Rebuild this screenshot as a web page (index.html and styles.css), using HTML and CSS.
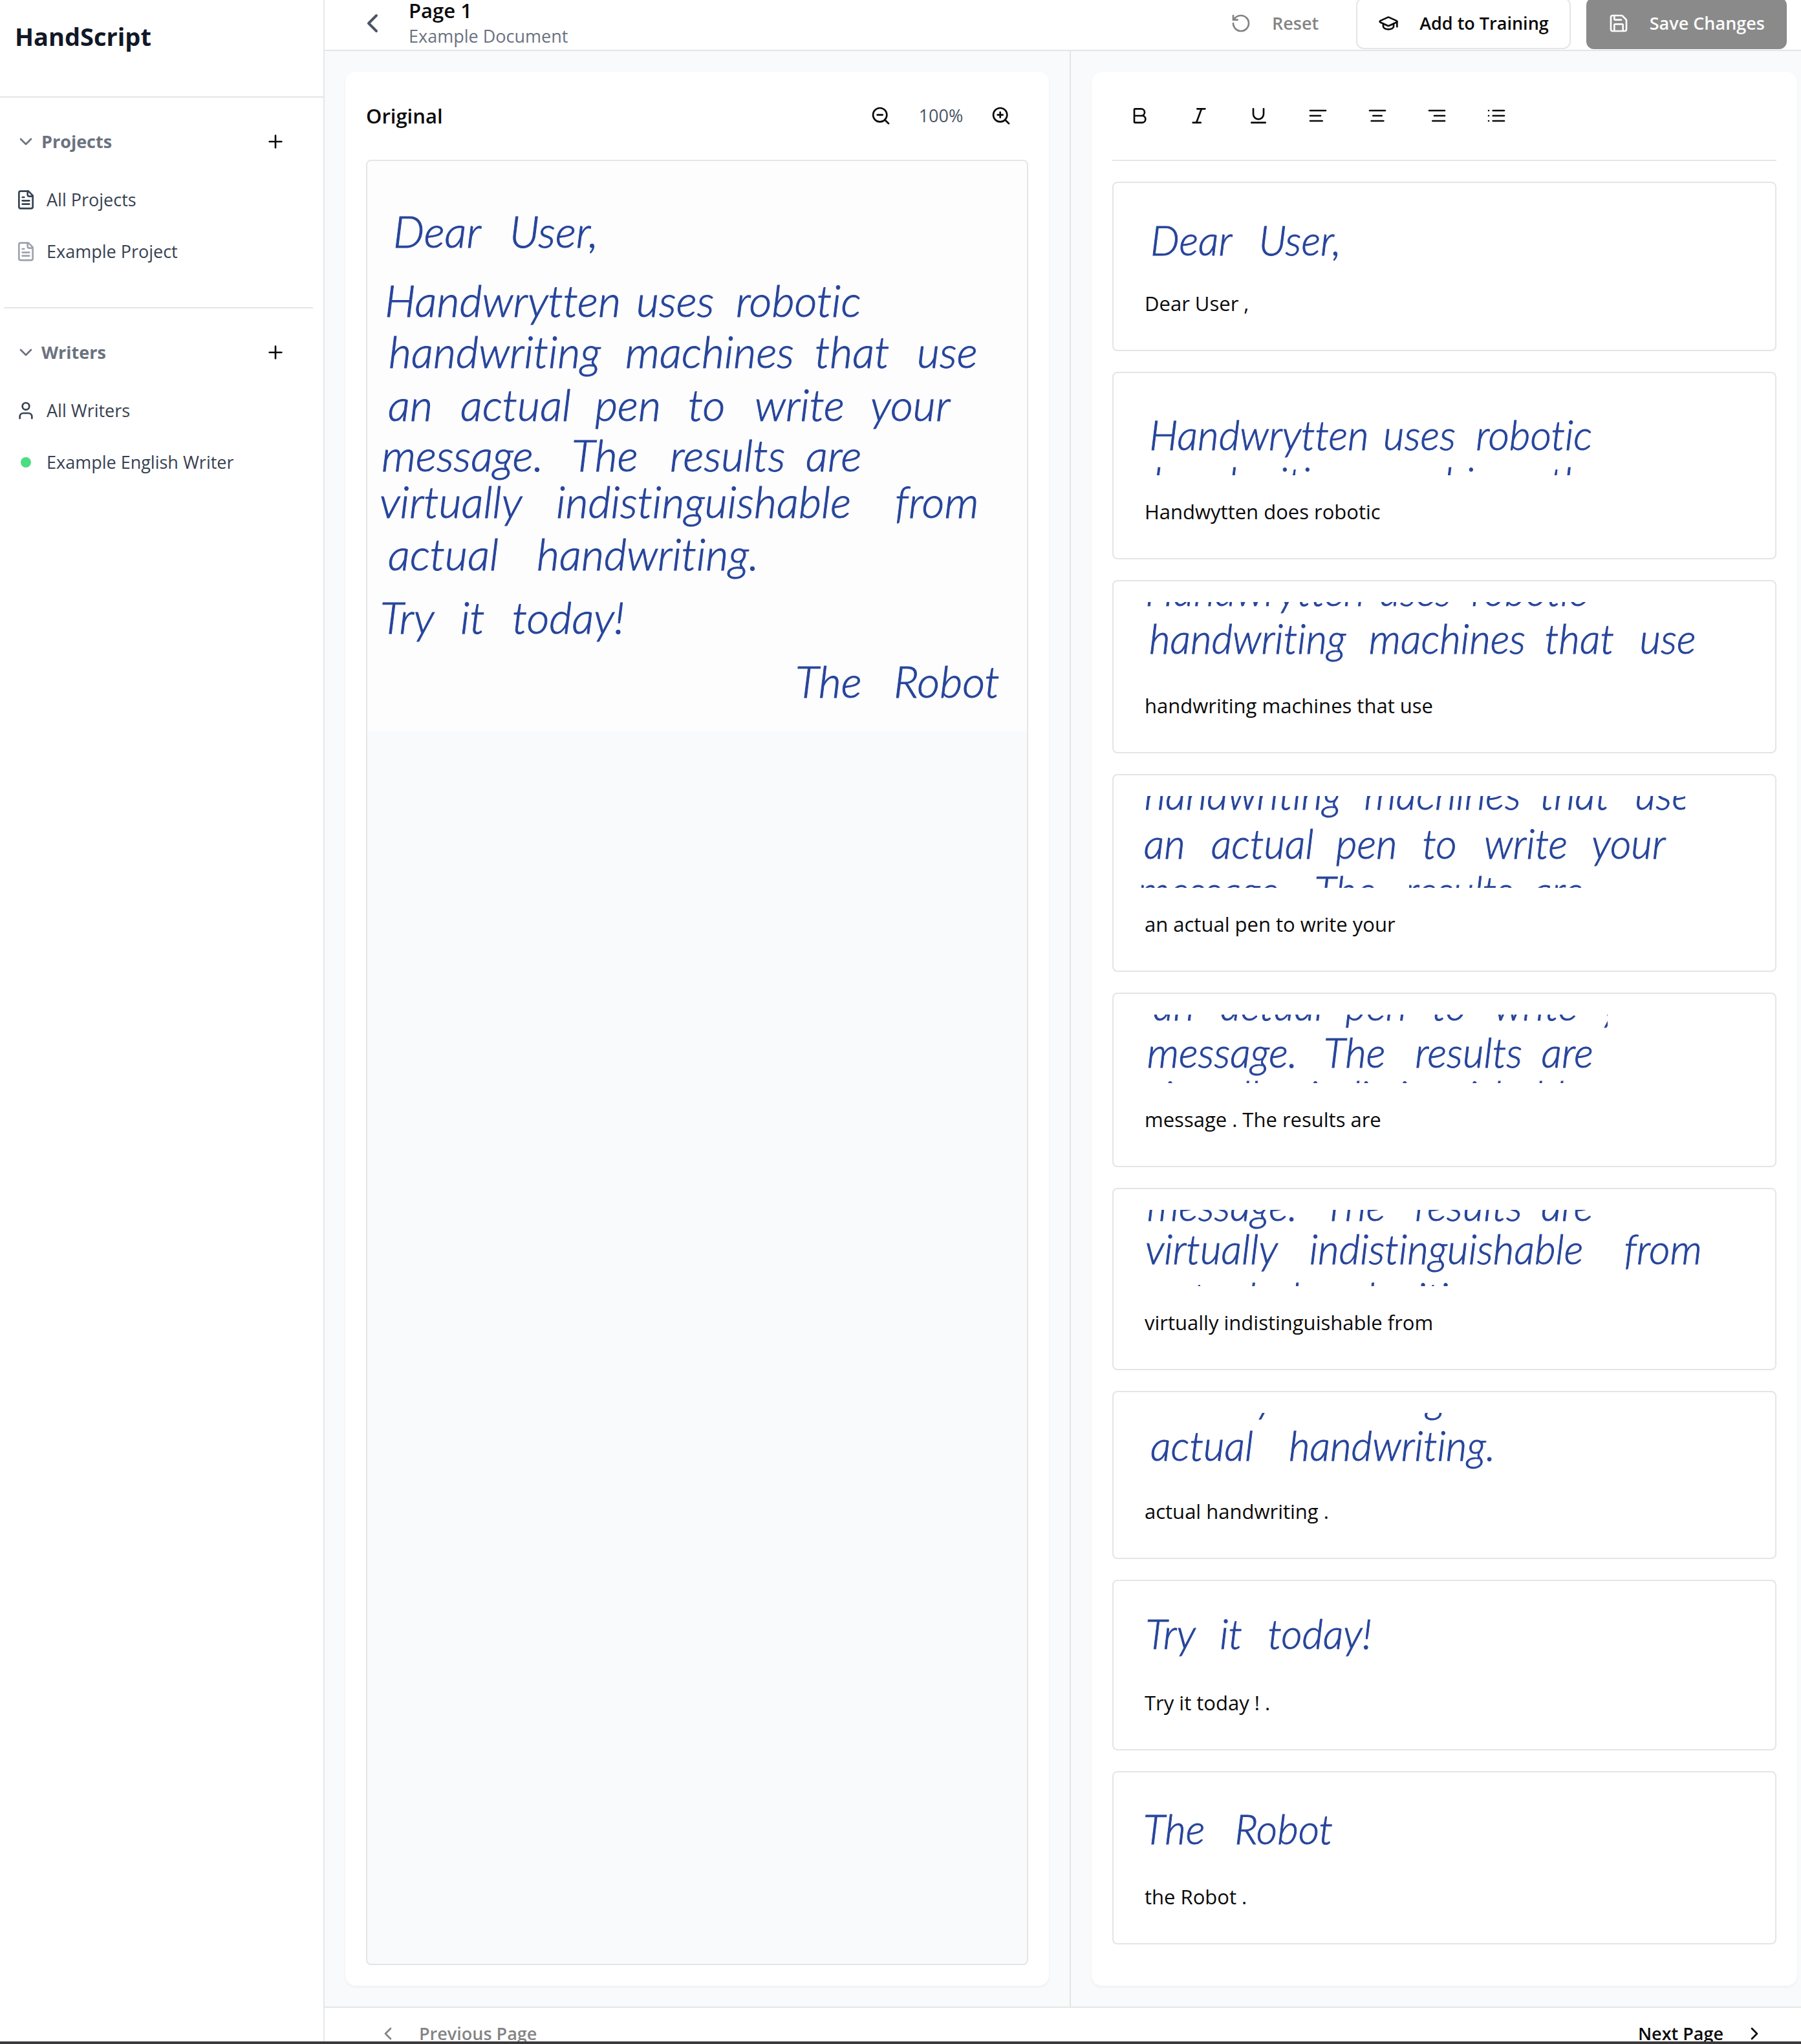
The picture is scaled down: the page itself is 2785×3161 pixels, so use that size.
FILE: index.html
```html
<!DOCTYPE html>
<html lang="en">
<head>
<meta charset="utf-8">
<meta name="viewport" content="width=device-width, initial-scale=1">
<title>HandScript</title>
<link rel="stylesheet" href="styles.css">
</head>
<body>
<svg class="defs" aria-hidden="true">
  <defs>
    <symbol id="i-file" viewBox="0 0 24 24"><path d="M15 2H6a2 2 0 0 0-2 2v16a2 2 0 0 0 2 2h12a2 2 0 0 0 2-2V7Z"/><path d="M14 2v4a2 2 0 0 0 2 2h4"/><path d="M10 9H8"/><path d="M16 13H8"/><path d="M16 17H8"/></symbol>
    <symbol id="i-plus" viewBox="0 0 24 24"><path d="M5 12h14"/><path d="M12 5v14"/></symbol>
    <symbol id="i-down" viewBox="0 0 24 24"><path d="m6 9 6 6 6-6"/></symbol>
    <symbol id="i-left" viewBox="0 0 24 24"><path d="m15 18-6-6 6-6"/></symbol>
    <symbol id="i-right" viewBox="0 0 24 24"><path d="m9 18 6-6-6-6"/></symbol>
    <symbol id="i-user" viewBox="0 0 24 24"><path d="M19 21v-2a4 4 0 0 0-4-4H9a4 4 0 0 0-4 4v2"/><circle cx="12" cy="7" r="4"/></symbol>
    <symbol id="i-reset" viewBox="0 0 24 24"><path d="M3 12a9 9 0 1 0 9-9 9.75 9.75 0 0 0-6.74 2.74L3 8"/><path d="M3 3v5h5"/></symbol>
    <symbol id="i-cap" viewBox="0 0 24 24"><path d="M21.42 10.922a1 1 0 0 0-.019-1.838L12.83 5.18a2 2 0 0 0-1.66 0L2.6 9.08a1 1 0 0 0 0 1.832l8.57 3.908a2 2 0 0 0 1.66 0z"/><path d="M22 10v6"/><path d="M6 12.5V16a6 3 0 0 0 12 0v-3.5"/></symbol>
    <symbol id="i-save" viewBox="0 0 24 24"><path d="M15.2 3a2 2 0 0 1 1.4.6l3.8 3.8a2 2 0 0 1 .6 1.4V19a2 2 0 0 1-2 2H5a2 2 0 0 1-2-2V5a2 2 0 0 1 2-2z"/><path d="M17 21v-7a1 1 0 0 0-1-1H8a1 1 0 0 0-1 1v7"/><path d="M7 3v4a1 1 0 0 0 1 1h7"/></symbol>
    <symbol id="i-zoomout" viewBox="0 0 24 24"><circle cx="11" cy="11" r="8"/><path d="m21 21-4.35-4.35"/><path d="M8 11h6"/></symbol>
    <symbol id="i-zoomin" viewBox="0 0 24 24"><circle cx="11" cy="11" r="8"/><path d="m21 21-4.35-4.35"/><path d="M11 8v6"/><path d="M8 11h6"/></symbol>
    <symbol id="i-bold" viewBox="0 0 24 24"><path d="M6 12h9a4 4 0 0 1 0 8H7a1 1 0 0 1-1-1V5a1 1 0 0 1 1-1h7a4 4 0 0 1 0 8"/></symbol>
    <symbol id="i-italic" viewBox="0 0 24 24"><path d="M19 4h-9"/><path d="M14 20H5"/><path d="M15 4 9 20"/></symbol>
    <symbol id="i-underline" viewBox="0 0 24 24"><path d="M6 4v6a6 6 0 0 0 12 0V4"/><path d="M4 20h16"/></symbol>
    <symbol id="i-aleft" viewBox="0 0 24 24"><path d="M15 12H3"/><path d="M17 18H3"/><path d="M21 6H3"/></symbol>
    <symbol id="i-acenter" viewBox="0 0 24 24"><path d="M17 12H7"/><path d="M19 18H5"/><path d="M21 6H3"/></symbol>
    <symbol id="i-aright" viewBox="0 0 24 24"><path d="M21 12H9"/><path d="M21 18H7"/><path d="M21 6H3"/></symbol>
    <symbol id="i-list" viewBox="0 0 24 24"><path d="M3 12h.01"/><path d="M3 18h.01"/><path d="M3 6h.01"/><path d="M8 12h13"/><path d="M8 18h13"/><path d="M8 6h13"/></symbol>
  </defs>
</svg>

<div class="app">
  <aside class="sidebar">
    <div class="brand"><h1>HandScript</h1></div>
    <section class="group">
      <div class="group-head">
        <button class="toggle" type="button"><svg class="icon"><use href="#i-down"/></svg>Projects</button>
        <button class="add" type="button" aria-label="Add project"><svg class="icon"><use href="#i-plus"/></svg></button>
      </div>
      <nav class="items" aria-label="Projects">
        <a href="#projects"><svg class="icon"><use href="#i-file"/></svg>All Projects</a>
        <a href="#example-project"><svg class="icon muted"><use href="#i-file"/></svg>Example Project</a>
      </nav>
    </section>
    <hr class="rule">
    <section class="group">
      <div class="group-head">
        <button class="toggle" type="button"><svg class="icon"><use href="#i-down"/></svg>Writers</button>
        <button class="add" type="button" aria-label="Add writer"><svg class="icon"><use href="#i-plus"/></svg></button>
      </div>
      <nav class="items" aria-label="Writers">
        <a href="#writers"><svg class="icon"><use href="#i-user"/></svg>All Writers</a>
        <a href="#example-writer"><span class="dot"></span>Example English Writer</a>
      </nav>
    </section>
  </aside>

  <main class="main">
    <header class="topbar">
      <button class="back" type="button" aria-label="Back"><svg class="icon large"><use href="#i-left"/></svg></button>
      <div class="titles">
        <h2>Page 1</h2>
        <p>Example Document</p>
      </div>
      <div class="actions">
        <button class="btn ghost" type="button" disabled><svg class="icon"><use href="#i-reset"/></svg>Reset</button>
        <button class="btn outline" type="button"><svg class="icon"><use href="#i-cap"/></svg>Add to Training</button>
        <button class="btn solid" type="button" disabled><svg class="icon"><use href="#i-save"/></svg>Save Changes</button>
      </div>
    </header>

    <div class="work">
      <section class="pane pane-left">
        <div class="card">
          <div class="card-head">
            <h3>Original</h3>
            <div class="zoom">
              <button class="tool" type="button" aria-label="Zoom out"><svg class="icon"><use href="#i-zoomout"/></svg></button>
              <span class="percent">100%</span>
              <button class="tool" type="button" aria-label="Zoom in"><svg class="icon"><use href="#i-zoomin"/></svg></button>
            </div>
          </div>
          <div class="canvas">
            <svg class="sheet" viewBox="0 0 1020 882">
              <rect width="1020" height="882" fill="#fdfdfe"/>
              <g id="letter" class="ink">
                <text y="134"><tspan x="40">Dear</tspan> <tspan x="220">User,</tspan></text>
                <text y="241"><tspan x="27">Handwrytten</tspan> <tspan x="416">uses</tspan> <tspan x="570">robotic</tspan></text>
                <text y="320"><tspan x="33">handwriting</tspan> <tspan x="399">machines</tspan> <tspan x="692">that</tspan> <tspan x="850">use</tspan></text>
                <text y="402"><tspan x="32">an</tspan> <tspan x="144">actual</tspan> <tspan x="352">pen</tspan> <tspan x="496">to</tspan> <tspan x="599">write</tspan> <tspan x="778">your</tspan></text>
                <text y="480"><tspan x="22">message.</tspan> <tspan x="316">The</tspan> <tspan x="468">results</tspan> <tspan x="678">are</tspan></text>
                <text y="552"><tspan x="19">virtually</tspan> <tspan x="292">indistinguishable</tspan> <tspan x="816">from</tspan></text>
                <text y="633"><tspan x="32">actual</tspan> <tspan x="262">handwriting.</tspan></text>
                <text y="731"><tspan x="20">Try</tspan> <tspan x="144">it</tspan> <tspan x="224">today!</tspan></text>
                <text y="830"><tspan x="662">The</tspan> <tspan x="814">Robot</tspan></text>
              </g>
            </svg>
          </div>
        </div>
      </section>

      <section class="pane pane-right">
        <div class="card">
          <div class="toolbar">
            <button class="tool" type="button" aria-label="Bold"><svg class="icon"><use href="#i-bold"/></svg></button>
            <button class="tool" type="button" aria-label="Italic"><svg class="icon"><use href="#i-italic"/></svg></button>
            <button class="tool" type="button" aria-label="Underline"><svg class="icon"><use href="#i-underline"/></svg></button>
            <button class="tool" type="button" aria-label="Align left"><svg class="icon"><use href="#i-aleft"/></svg></button>
            <button class="tool" type="button" aria-label="Align center"><svg class="icon"><use href="#i-acenter"/></svg></button>
            <button class="tool" type="button" aria-label="Align right"><svg class="icon"><use href="#i-aright"/></svg></button>
            <button class="tool" type="button" aria-label="List"><svg class="icon"><use href="#i-list"/></svg></button>
          </div>
          <div class="lines">
            <div class="line"><svg class="strip" width="344" height="98" viewBox="13 48 370 105"><use href="#letter"/></svg><input type="text" aria-label="Line 1" value="Dear User ,"></div>
            <div class="line"><svg class="strip" width="718" height="126" viewBox="2 148 772 135"><use href="#letter"/></svg><input type="text" aria-label="Line 2" value="Handwytten does robotic"></div>
            <div class="line"><svg class="strip" width="902" height="104" viewBox="9 234 970 112"><use href="#letter"/></svg><input type="text" aria-label="Line 3" value="handwriting machines that use"></div>
            <div class="line"><svg class="strip" width="852" height="142" viewBox="17 297 916 153"><use href="#letter"/></svg><input type="text" aria-label="Line 4" value="an actual pen to write your"></div>
            <div class="line"><svg class="strip" width="732" height="106" viewBox="1 392 787 114"><use href="#letter"/></svg><input type="text" aria-label="Line 5" value="message . The results are"></div>
            <div class="line"><svg class="strip" width="912" height="118" viewBox="1 462 981 127"><use href="#letter"/></svg><input type="text" aria-label="Line 6" value="virtually indistinguishable from"></div>
            <div class="line"><svg class="strip" width="594" height="96" viewBox="5 553 639 103"><use href="#letter"/></svg><input type="text" aria-label="Line 7" value="actual handwriting ."></div>
            <div class="line"><svg class="strip" width="410" height="100" viewBox="2 652 441 108"><use href="#letter"/></svg><input type="text" aria-label="Line 8" value="Try it today ! ."></div>
            <div class="line"><svg class="strip" width="340" height="104" viewBox="647 745 366 112"><use href="#letter"/></svg><input type="text" aria-label="Line 9" value="the Robot ."></div>
          </div>
        </div>
      </section>
    </div>

    <footer class="pager">
      <button class="btn ghost" type="button" disabled><svg class="icon"><use href="#i-left"/></svg>Previous Page</button>
      <button class="btn ghost" type="button">Next Page<svg class="icon"><use href="#i-right"/></svg></button>
    </footer>
  </main>
</div>
</body>
</html>
```
FILE: styles.css
```css
* { box-sizing: border-box; }

body {
  margin: 0;
  background: #fff;
  color: #0a0a0a;
  font-family: "Open Sans", "Noto Sans", sans-serif;
  font-size: 27px;
  line-height: 40px;
}

h1, h2, h3, p { margin: 0; }

button {
  margin: 0;
  padding: 0;
  border: 0;
  background: none;
  color: inherit;
  font: inherit;
}

a { color: inherit; text-decoration: none; }

.defs { position: absolute; width: 0; height: 0; }

.icon {
  display: block;
  flex: none;
  width: 32px;
  height: 32px;
  fill: none;
  stroke: currentColor;
  stroke-width: 2;
  stroke-linecap: round;
  stroke-linejoin: round;
}
.icon.large { width: 48px; height: 48px; }
.icon.muted { color: #9ca3af; }

.app {
  display: grid;
  grid-template-columns: 502px minmax(0, 1fr);
  min-height: 100vh;
  border-bottom: 4px solid #3a3a3c;
}

/* Sidebar */
.sidebar { border-right: 2px solid #e5e7eb; }

.brand {
  height: 151px;
  padding: 28px 23px;
  border-bottom: 2px solid #e5e5e5;
}
.brand h1 {
  color: #111827;
  font-size: 38px;
  font-weight: 700;
  line-height: 56px;
}

.group { padding: 30px 24px 50px; }

.group-head {
  display: flex;
  align-items: center;
  justify-content: space-between;
  height: 76px;
  margin-bottom: 16px;
}
.toggle {
  display: flex;
  align-items: center;
  gap: 8px;
  color: #6b7280;
  font-weight: 700;
}
.add { padding: 20px 34px; }

.items { display: grid; gap: 8px; color: #374151; }
.items a {
  display: flex;
  align-items: center;
  gap: 16px;
  height: 72px;
}
.dot {
  width: 16px;
  height: 16px;
  margin: 0 8px;
  border-radius: 50%;
  background: #4ade80;
}

.rule {
  height: 2px;
  margin: 0 16px 0 6px;
  border: 0;
  background: #e5e5e5;
}

/* Main column */
.main {
  display: grid;
  grid-template-rows: auto 1fr auto;
  min-width: 0;
}

.topbar {
  display: flex;
  align-items: flex-start;
  height: 79px;
  padding: 0 22px 0 50px;
  border-bottom: 2px solid #e5e5e5;
  background: #fff;
}
.topbar > * { height: 80px; margin-top: -4px; }
.back { color: #4b5563; }
.titles { margin-left: 32px; }
.titles h2 {
  font-size: 31px;
  font-weight: 600;
  line-height: 40px;
}
.titles p { color: #6b7280; }

.actions { display: flex; gap: 24px; margin-left: auto; }

.btn {
  display: flex;
  align-items: center;
  gap: 32px;
  height: 80px;
  padding: 0 32px;
  border: 2px solid transparent;
  border-radius: 12px;
  font-weight: 600;
}
.btn.outline { border-color: #e5e5e5; background: #fff; }
.btn.solid { background: #171717; color: #fafafa; }
.btn:disabled { opacity: .5; }

.work {
  display: grid;
  grid-template-columns: 1152fr 1131fr;
  background: #f9fafb;
}
.pane { display: grid; min-width: 0; padding: 32px; }
.pane-right { padding-right: 6px; border-left: 2px solid #e5e5e5; }

.card {
  display: flex;
  flex-direction: column;
  min-width: 0;
  padding: 32px;
  border-radius: 16px;
  background: #fff;
  box-shadow: 0 2px 4px rgba(0, 0, 0, .05);
}

.card-head {
  display: flex;
  align-items: center;
  justify-content: space-between;
  height: 72px;
  margin-bottom: 32px;
}
.card-head h3 { font-size: 31px; font-weight: 600; }
.zoom { display: flex; align-items: center; gap: 16px; }
.percent {
  min-width: 70px;
  color: #4b5563;
  text-align: center;
}

.tool {
  display: grid;
  place-items: center;
  width: 84px;
  height: 72px;
}

.canvas {
  flex: 1;
  overflow: hidden;
  border: 2px solid #e5e5e5;
  border-radius: 8px;
  background: #f9fafb;
}
.sheet { display: block; width: 100%; height: auto; }

.ink {
  fill: #27459b;
  stroke: #27459b;
  stroke-width: 1;
  font-family: Lato, sans-serif;
  font-size: 68px;
  font-style: italic;
  font-weight: 300;
  font-variant-ligatures: none;
}

.toolbar {
  display: flex;
  gap: 8px;
  margin-bottom: 32px;
  padding-bottom: 32px;
  border-bottom: 2px solid #e5e5e5;
}

.lines { display: grid; gap: 32px; }
.line {
  display: grid;
  gap: 16px;
  padding: 32px;
  border: 2px solid #e5e5e5;
  border-radius: 8px;
}
.strip { display: block; max-width: 100%; overflow: hidden; }
.line input {
  width: 100%;
  height: 80px;
  padding: 16px;
  border: 0;
  background: none;
  color: inherit;
  font: inherit;
  font-size: 31px;
}

.pager {
  display: flex;
  justify-content: space-between;
  height: 54px;
  padding: 0 22px 0 48px;
  overflow: hidden;
  border-top: 2px solid #e5e5e5;
  background: #fff;
}
```
